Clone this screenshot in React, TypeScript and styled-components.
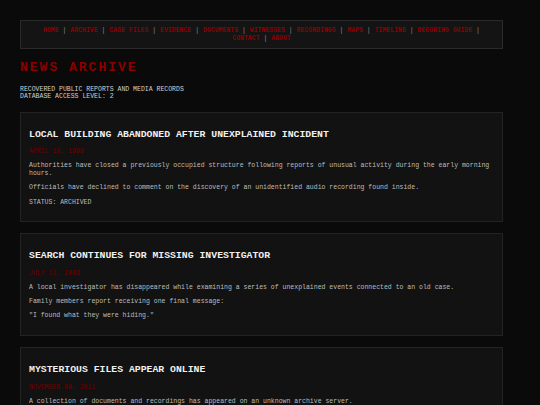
import React from 'react';
import styled, { createGlobalStyle } from 'styled-components';

const GlobalStyle = createGlobalStyle`
  html, body {
    margin: 0;
    padding: 0;
    background: #0a0a0a;
  }
  body {
    font-family: "Liberation Mono", "DejaVu Sans Mono", monospace;
    color: #c8c8c8;
    -webkit-font-smoothing: antialiased;
  }
`;

const Page = styled.div`
  padding: 20px;
`;

const Container = styled.main`
  max-width: 483px;
  display: flex;
  flex-direction: column;
`;

const Nav = styled.nav`
  background: #141414;
  border: 1px solid #2a2a2a;
  padding: 6px 16px;
  text-align: center;
  font-size: 6.5px;
  line-height: 7.7px;
  font-weight: 700;
`;

const NavLink = styled.a`
  color: #8e0000;
  text-decoration: none;
`;

const Sep = styled.span`
  color: #8a8a8a;
  font-weight: 400;
`;

const Title = styled.h1`
  margin: 11px 0 0;
  color: #8b0000;
  font-size: 13px;
  line-height: 15.6px;
  font-weight: 700;
  letter-spacing: 2px;
`;

const Subtitle = styled.p`
  margin: 9.6px 0 0;
  font-size: 6.5px;
  line-height: 7.5px;
  color: #d0d0d0;
`;

const Cards = styled.div`
  display: flex;
  flex-direction: column;
  gap: 11px;
  margin-top: 11px;
`;

const Card = styled.article`
  background: #121212;
  border: 1px solid #232323;
  padding: 8px 8px 8.5px;
`;

const Headline = styled.h2`
  margin: 8px 0 7.5px;
  color: #f0f0f0;
  font-size: 9.8px;
  line-height: 12px;
  font-weight: 700;
`;

const DateLine = styled.div`
  color: #700000;
  font-size: 6.5px;
  line-height: 7.8px;
`;

const Para = styled.p`
  margin: 6.5px 0;
  font-size: 6.5px;
  line-height: 7.7px;
  color: #bdbdbd;
`;

const links = [
  'HOME', 'ARCHIVE', 'CASE FILES', 'EVIDENCE', 'DOCUMENTS', 'WITNESSES',
  'RECORDINGS', 'MAPS', 'TIMELINE', 'DECODING GUIDE', 'CONTACT', 'ABOUT',
];

type Story = { headline: string; date: string; paras: string[] };

const stories: Story[] = [
  {
    headline: 'LOCAL BUILDING ABANDONED AFTER UNEXPLAINED INCIDENT',
    date: 'APRIL 18, 1998',
    paras: [
      'Authorities have closed a previously occupied structure following reports of unusual activity during the early morning hours.',
      'Officials have declined to comment on the discovery of an unidentified audio recording found inside.',
      'STATUS: ARCHIVED',
    ],
  },
  {
    headline: 'SEARCH CONTINUES FOR MISSING INVESTIGATOR',
    date: 'JULY 12, 2003',
    paras: [
      'A local investigator has disappeared while examining a series of unexplained events connected to an old case.',
      'Family members report receiving one final message:',
      '"I found what they were hiding."',
    ],
  },
  {
    headline: 'MYSTERIOUS FILES APPEAR ONLINE',
    date: 'NOVEMBER 06, 2011',
    paras: [
      'A collection of documents and recordings has appeared on an unknown archive server.',
      'Many of the files appear to reference locations and people that cannot be verified.',
    ],
  },
];

const App: React.FC = () => {
  return (
    <Page>
      <GlobalStyle />
      <Container>
        <Nav>
          {links.map((l, i) => (
            <React.Fragment key={l}>
              <NavLink href="#">{l}</NavLink>
              {i < links.length - 1 && <Sep> | </Sep>}
            </React.Fragment>
          ))}
        </Nav>

        <Title>NEWS ARCHIVE</Title>
        <Subtitle>
          RECOVERED PUBLIC REPORTS AND MEDIA RECORDS
          <br />
          DATABASE ACCESS LEVEL: 2
        </Subtitle>

        <Cards>
          {stories.map((s) => (
            <Card key={s.headline}>
              <Headline>{s.headline}</Headline>
              <DateLine>{s.date}</DateLine>
              {s.paras.map((p) => (
                <Para key={p}>{p}</Para>
              ))}
            </Card>
          ))}
        </Cards>
      </Container>
    </Page>
  );
};

export default App;
